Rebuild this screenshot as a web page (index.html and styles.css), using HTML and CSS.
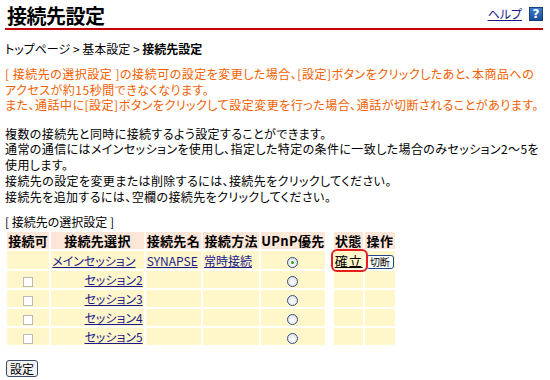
FILE: index.html
```html
<!DOCTYPE html>
<html lang="ja">
<head>
<meta charset="utf-8">
<title>接続先設定</title>
<link rel="stylesheet" href="styles.css">
</head>
<body>
<div class="page">
  <header class="titlebar">
    <h1 class="title">接続先設定</h1>
    <div class="help"><a href="#" class="link">ヘルプ</a><span class="help-icon">?</span></div>
  </header>
  <p class="crumb">トップページ &gt; 基本設定 &gt; <b>接続先設定</b></p>
  <p class="warn">[ 接続先の選択設定 ]の接続可の設定を変更した場合、[設定]ボタンをクリックしたあと、本商品への<br>アクセスが約15秒間できなくなります。<br>また、通話中に[設定]ボタンをクリックして設定変更を行った場合、通話が切断されることがあります。</p>
  <p class="desc">複数の接続先と同時に接続するよう設定することができます。<br>通常の通信にはメインセッションを使用し、指定した特定の条件に一致した場合のみセッション2～5を<br>使用します。<br>接続先の設定を変更または削除するには、接続先をクリックしてください。<br>接続先を追加するには、空欄の接続先をクリックしてください。</p>
  <div class="label">[ 接続先の選択設定 ]</div>
  <table class="sess">
    <colgroup>
      <col class="c1"><col class="c2"><col class="c3"><col class="c4"><col class="c5"><col class="cg"><col class="c6"><col class="c7">
    </colgroup>
    <thead>
      <tr><th>接続可</th><th>接続先選択</th><th>接続先名</th><th>接続方法</th><th>UPnP優先</th><td class="gap"></td><th>状態</th><th>操作</th></tr>
    </thead>
    <tbody>
      <tr><td></td><td class="left"><a href="#" class="link">メインセッション</a></td><td class="left"><a href="#" class="link">SYNAPSE</a></td><td class="left"><a href="#" class="link">常時接続</a></td><td class="mid"><span class="radio on"></span></td><td class="gap"></td><td class="mid"><a href="#" class="link state">確立</a></td><td class="mid"><span class="btn-small">切断</span></td></tr>
      <tr><td class="mid"><span class="check"></span></td><td class="right"><a href="#" class="link">セッション2</a></td><td></td><td></td><td class="mid"><span class="radio"></span></td><td class="gap"></td><td></td><td></td></tr>
      <tr><td class="mid"><span class="check"></span></td><td class="right"><a href="#" class="link">セッション3</a></td><td></td><td></td><td class="mid"><span class="radio"></span></td><td class="gap"></td><td></td><td></td></tr>
      <tr><td class="mid"><span class="check"></span></td><td class="right"><a href="#" class="link">セッション4</a></td><td></td><td></td><td class="mid"><span class="radio"></span></td><td class="gap"></td><td></td><td></td></tr>
      <tr><td class="mid"><span class="check"></span></td><td class="right"><a href="#" class="link">セッション5</a></td><td></td><td></td><td class="mid"><span class="radio"></span></td><td class="gap"></td><td></td><td></td></tr>
    </tbody>
  </table>
  <button class="submit" type="button">設定</button>
</div>
</body>
</html>
```
FILE: styles.css
```css
html, body {
  margin: 0;
  padding: 0;
  background: #ffffff;
}
body {
  font-family: "Noto Sans CJK JP", "Noto Sans", sans-serif;
  font-size: 12px;
  color: #000;
  font-feature-settings: "palt";
}
.page {
  padding: 0 5px;
  width: 538px;
}
.titlebar {
  display: flex;
  justify-content: space-between;
  align-items: flex-end;
  border-bottom: 2px solid #c40000;
  padding-top: 3px;
}
.title {
  margin: 0 0 0 2px;
  font-size: 20px;
  line-height: 25px;
  font-weight: bold;
  letter-spacing: -0.5px;
}
.help {
  display: flex;
  align-items: center;
  gap: 7px;
  margin-bottom: 7px;
}
.link {
  color: #1a1a8c;
  text-decoration: underline;
}
.help .link {
  font-size: 12px;
  line-height: 14px;
}
.help-icon {
  display: inline-block;
  width: 14px;
  height: 14px;
  box-sizing: border-box;
  background: linear-gradient(#3f7cc8, #1c4f9a);
  border: 1px solid #153f7c;
  color: #fff;
  font-family: "DejaVu Sans", sans-serif;
  font-weight: bold;
  font-size: 12px;
  line-height: 12px;
  text-align: center;
}
.crumb {
  margin: 11px 0 0;
  line-height: 16px;
}
.warn {
  margin: 9px 0 0;
  color: #f26000;
  line-height: 15.5px;
  white-space: nowrap;
  letter-spacing: 0.5px;
}
.desc {
  margin: 13px 0 0;
  line-height: 15.75px;
  white-space: nowrap;
  letter-spacing: 0.4px;
}
.label {
  margin-top: 11px;
  line-height: 14px;
}
.sess {
  border-collapse: separate;
  border-spacing: 2px;
  table-layout: fixed;
  width: 392px;
  margin-top: 1px;
}
.c1 { width: 42px; }
.c2 { width: 92px; }
.c3 { width: 55px; }
.c4 { width: 56px; }
.c5 { width: 63px; }
.cg { width: 5px; }
.c6 { width: 29px; }
.c7 { width: 30px; }
.sess th {
  background: #fbe6d8;
  font-size: 13px;
  font-weight: bold;
  height: 17px;
  padding: 0;
  line-height: 17px;
  text-align: center;
  white-space: nowrap;
  letter-spacing: 0.3px;
}
.sess td {
  background: #fff6c9;
  height: 17px;
  padding: 0 1px;
  line-height: 17px;
  white-space: nowrap;
}
.sess td.gap {
  background: transparent;
}
.sess td.left { text-align: left; }
.sess td.right { text-align: right; }
.sess td.mid { text-align: center; }
.check {
  display: inline-block;
  width: 10px;
  height: 10px;
  box-sizing: border-box;
  border: 1px solid #b9b9b9;
  background: #fff;
  vertical-align: middle;
}
.radio {
  display: inline-block;
  width: 11px;
  height: 11px;
  box-sizing: border-box;
  border: 1px solid #2f5288;
  border-radius: 50%;
  background: radial-gradient(circle at 50% 60%, #ffffff 0, #ececec 55%, #d6d6d6 100%);
  vertical-align: middle;
  position: relative;
}
.radio.on::after {
  content: "";
  position: absolute;
  left: 3px;
  top: 3px;
  width: 3px;
  height: 3px;
  border-radius: 50%;
  background: #22aa22;
}
.state {
  position: relative;
  display: inline-block;
  font-size: 13px;
  line-height: 15px;
  color: #000;
  letter-spacing: 1px;
}
.state::after {
  content: "";
  position: absolute;
  left: -4px;
  right: -5px;
  top: -4px;
  bottom: -4px;
  border: 2px solid #e61e1e;
  border-radius: 6px;
}
.btn-small {
  display: inline-block;
  font-size: 10px;
  line-height: 10px;
  padding: 1px 3px;
  border: 1px solid #24468a;
  border-radius: 3px;
  background: #fff;
  vertical-align: middle;
}
.submit {
  display: block;
  margin: 13px 0 0 1px;
  font-family: inherit;
  font-size: 12px;
  line-height: 13px;
  padding: 1px 3px;
  background: #f2f2f2;
  border: 1px solid #3b4a66;
  border-radius: 3px;
  color: #000;
}
```
